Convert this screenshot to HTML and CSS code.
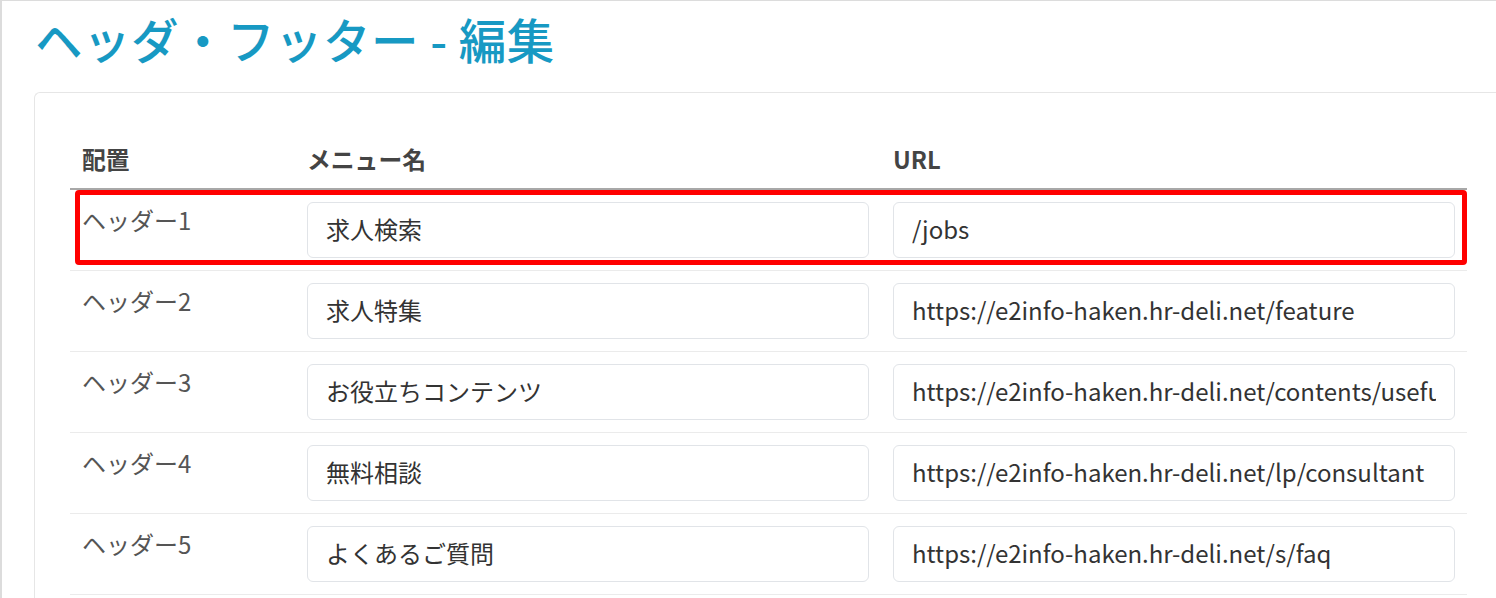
FILE: index.html
```html
<!DOCTYPE html>
<html lang="ja">
<head>
<meta charset="utf-8">
<title>ヘッダ・フッター - 編集</title>
<link rel="stylesheet" href="styles.css">
</head>
<body>
<div class="frame">
  <h1 class="page-title">ヘッダ・フッター - 編集</h1>
  <div class="card">
    <div class="table-wrap">
      <table class="menu-table">
        <colgroup>
          <col class="col-pos">
          <col class="col-name">
          <col class="col-url">
        </colgroup>
        <thead>
          <tr>
            <th>配置</th>
            <th>メニュー名</th>
            <th>URL</th>
          </tr>
        </thead>
        <tbody>
          <tr>
            <td class="pos">ヘッダー1</td>
            <td><input class="field" type="text" value="求人検索"></td>
            <td><input class="field" type="text" value="/jobs"></td>
          </tr>
          <tr>
            <td class="pos">ヘッダー2</td>
            <td><input class="field" type="text" value="求人特集"></td>
            <td><input class="field" type="text" value="https://e2info-haken.hr-deli.net/feature"></td>
          </tr>
          <tr>
            <td class="pos">ヘッダー3</td>
            <td><input class="field" type="text" value="お役立ちコンテンツ"></td>
            <td><input class="field" type="text" value="https://e2info-haken.hr-deli.net/contents/useful"></td>
          </tr>
          <tr>
            <td class="pos">ヘッダー4</td>
            <td><input class="field" type="text" value="無料相談"></td>
            <td><input class="field" type="text" value="https://e2info-haken.hr-deli.net/lp/consultant"></td>
          </tr>
          <tr>
            <td class="pos">ヘッダー5</td>
            <td><input class="field" type="text" value="よくあるご質問"></td>
            <td><input class="field" type="text" value="https://e2info-haken.hr-deli.net/s/faq"></td>
          </tr>
        </tbody>
      </table>
      <div class="highlight"></div>
    </div>
  </div>
</div>
</body>
</html>
```

FILE: styles.css
```css
* { box-sizing: border-box; }

html, body {
  margin: 0;
  padding: 0;
  background: #fff;
}

body {
  font-family: "Noto Sans CJK JP", "Noto Sans", sans-serif;
  color: #333;
  overflow: hidden;
}

.frame {
  height: 598px;
  border-top: 1px solid #dcdcdc;
  border-left: 2px solid #dcdcdc;
  padding: 0 0 0 32px;
}

.page-title {
  margin: 8px 0 23px 1px;
  font-size: 47.5px;
  line-height: 60px;
  font-weight: 500;
  color: #1799c3;
  letter-spacing: 0.5px;
}

.card {
  border: 1px solid #e6e6e6;
  border-right: none;
  border-radius: 6px 0 0 0;
  padding: 36px 0 0 35px;
  height: 600px;
}

.table-wrap {
  position: relative;
  width: 1397px;
}

.menu-table {
  width: 1397px;
  border-collapse: collapse;
  table-layout: fixed;
}

.col-pos { width: 225px; }
.col-name { width: 586px; }
.col-url { width: 586px; }

.menu-table th {
  text-align: left;
  font-size: 23.8px;
  font-weight: 700;
  color: #444;
  padding: 0 12px;
  height: 60px;
  vertical-align: middle;
  border-bottom: 2px solid #a8a8a8;
}

.menu-table td {
  padding: 12px 12px;
  border-bottom: 1px solid #ebebeb;
  vertical-align: top;
}

.menu-table td.pos {
  font-size: 24px;
  color: #555;
  line-height: 30px;
  padding-top: 15px;
  white-space: nowrap;
}

.field {
  display: block;
  width: 100%;
  height: 56px;
  border: 1.5px solid #e1e4e8;
  border-radius: 6px;
  padding: 0 18px 3px;
  font-family: "Noto Sans CJK JP", "Noto Sans", sans-serif;
  font-size: 24px;
  color: #333;
  background: #fff;
  outline: none;
}

.highlight {
  position: absolute;
  left: 5px;
  right: 0;
  top: 61px;
  height: 75px;
  border: 5px solid #ff0000;
  border-radius: 4px;
  pointer-events: none;
}
```
